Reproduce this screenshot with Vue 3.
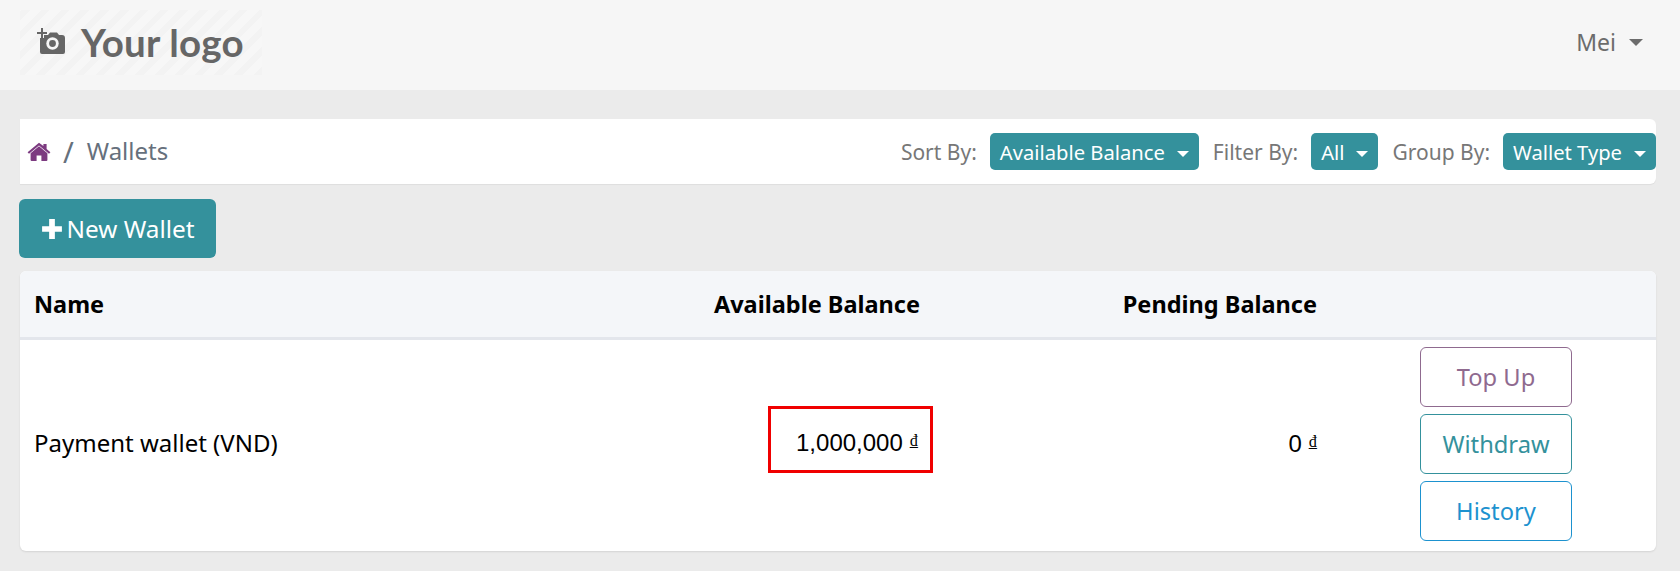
<template>
  <div class="page">
    <header class="topbar">
      <div class="logo">
        <svg class="logo__icon" viewBox="0 0 30 28" width="30" height="28">
          <path d="M5 0h2v4h4v2H7v4H5V6H1V4h4z" fill="#666" />
          <path d="M4 12V10h4V7h4l2-2.5h7L23 7h3a3 3 0 0 1 3 3v14a2 2 0 0 1-2 2H6a2 2 0 0 1-2-2z" fill="#666" />
          <circle cx="16.5" cy="15.5" r="6.2" fill="#f6f6f6" />
          <circle cx="16.5" cy="15.5" r="3.4" fill="#666" />
        </svg>
        <span class="logo__text">Your logo</span>
      </div>
      <div class="user">
        <span>Mei</span>
        <i class="caret caret--user"></i>
      </div>
    </header>

    <main class="content">
      <section class="crumbs">
        <nav class="crumbs__path">
          <svg class="home" viewBox="0 0 24 20" width="24" height="20">
            <path d="M12 4.2 3.6 11.2V18a1 1 0 0 0 1 1h5v-5.4h4.8V19h5a1 1 0 0 0 1-1v-6.8z" fill="#7c3a80" />
            <path d="M12 .8 0.6 10.2l1.4 1.6L12 3.6l10 8.2 1.4-1.6-3.8-3.1V2h-3.2v2.1z" fill="#7c3a80" />
          </svg>
          <span class="sep">/</span>
          <span class="current">Wallets</span>
        </nav>
        <div class="filters">
          <template v-for="item in filters" :key="item.label">
            <span class="filters__label">{{ item.label }}</span>
            <button class="pill" type="button">
              {{ item.value }}<i class="caret caret--pill"></i>
            </button>
          </template>
        </div>
      </section>

      <button class="new-wallet" type="button">
        <svg viewBox="0 0 20 20" width="22" height="22">
          <path d="M7.4 1h5.2v6.4H19v5.2h-6.4V19H7.4v-6.4H1V7.4h6.4z" fill="#fff" />
        </svg>
        New Wallet
      </button>

      <section class="wallets">
        <table class="wallets__table">
          <colgroup>
            <col class="col-name" />
            <col class="col-amount" />
            <col class="col-pending" />
            <col />
          </colgroup>
          <thead>
            <tr>
              <th>Name</th>
              <th class="right">Available Balance</th>
              <th class="right">Pending Balance</th>
              <th></th>
            </tr>
          </thead>
          <tbody>
            <tr v-for="wallet in wallets" :key="wallet.name">
              <td class="nudge">{{ wallet.name }}</td>
              <td class="right">
                <span class="marked">
                  <span class="amount">{{ wallet.available }}</span>
                  <span class="currency">₫</span>
                </span>
              </td>
              <td class="right nudge">
                <span class="amount">{{ wallet.pending }}</span>
                <span class="currency">₫</span>
              </td>
              <td class="actions">
                <button
                  v-for="action in actions"
                  :key="action.label"
                  type="button"
                  class="action"
                  :class="action.cls"
                >
                  {{ action.label }}
                </button>
              </td>
            </tr>
          </tbody>
        </table>
      </section>
    </main>
  </div>
</template>

<script setup>
const filters = [
  { label: "Sort By:", value: "Available Balance" },
  { label: "Filter By:", value: "All" },
  { label: "Group By:", value: "Wallet Type" }
];

const wallets = [
  { name: "Payment wallet (VND)", available: "1,000,000", pending: "0" }
];

const actions = [
  { label: "Top Up", cls: "action--topup" },
  { label: "Withdraw", cls: "action--withdraw" },
  { label: "History", cls: "action--history" }
];
</script>

<style>
html,
body {
  margin: 0;
  background: #ebebeb;
}
</style>

<style scoped>
.page {
  height: 571px;
  overflow: hidden;
  background: #ebebeb;
  font-family: "Noto Sans", "Open Sans", sans-serif;
}

.topbar {
  height: 90px;
  box-sizing: border-box;
  display: flex;
  align-items: center;
  justify-content: space-between;
  background: #f6f6f6;
  padding: 0 37px 6px 20px;
}

.logo {
  width: 242px;
  height: 65px;
  box-sizing: border-box;
  padding-left: 16px;
  display: flex;
  align-items: center;
  gap: 15px;
  color: #666;
  background: repeating-linear-gradient(
    -45deg,
    #f3f3f3 0 6px,
    #f7f7f7 6px 14px
  );
}

.logo__text {
  font-family: "Lato", sans-serif;
  font-size: 38.5px;
  font-weight: 700;
  letter-spacing: 0.2px;
}

.user {
  display: flex;
  align-items: center;
  gap: 13px;
  font-size: 23px;
  color: #6c6c6c;
}

.caret {
  display: inline-block;
  width: 0;
  height: 0;
  border-left: 7px solid transparent;
  border-right: 7px solid transparent;
  border-top: 7px solid #6c6c6c;
}

.caret--pill {
  border-top-color: #fff;
  border-left-width: 6px;
  border-right-width: 6px;
  border-top-width: 6px;
  margin-left: 12px;
  vertical-align: 3px;
}

.content {
  padding: 29px 24px 0 19px;
  display: flex;
  flex-direction: column;
}

.crumbs {
  height: 65px;
  margin-left: 1px;
  display: flex;
  align-items: center;
  justify-content: space-between;
  background: #fff;
  border-radius: 0 6px 6px 0;
  box-shadow: 0 1px 1px rgba(0, 0, 0, 0.06);
}

.crumbs__path {
  display: flex;
  align-items: center;
  padding-left: 7px;
  font-size: 24px;
  color: #66707c;
}

.current {
  margin-top: -2px;
}

.sep {
  margin: 0 13px 0 12px;
  font-size: 29px;
}

.filters {
  display: flex;
  align-items: center;
}

.filters__label {
  font-size: 21px;
  color: #777;
  margin-left: 14px;
  margin-right: 13px;
}

.pill {
  height: 37px;
  padding: 0 10px;
  border: none;
  border-radius: 5px;
  background: #34919c;
  color: #fff;
  font: inherit;
  font-size: 20.2px;
  white-space: nowrap;
}

.new-wallet {
  align-self: flex-start;
  width: 197px;
  height: 59px;
  margin-top: 15px;
  display: flex;
  align-items: center;
  justify-content: center;
  gap: 4px;
  border: none;
  border-radius: 6px;
  background: #34919c;
  color: #fff;
  font: inherit;
  font-size: 24.3px;
}

.wallets {
  margin: 13px 0 0 1px;
  height: 280px;
  background: #fff;
  border-radius: 6px;
  overflow: hidden;
  box-shadow: 0 1px 2px rgba(0, 0, 0, 0.1);
}

.wallets__table {
  width: 100%;
  border-collapse: collapse;
  table-layout: fixed;
  color: #000;
  font-size: 24px;
}

.col-name {
  width: 500px;
}

.col-amount {
  width: 414px;
}

.col-pending {
  width: 397px;
}

.wallets__table th {
  height: 66px;
  padding: 0 14px;
  text-align: left;
  font-size: 23.5px;
  font-weight: 700;
  background: #f4f6f9;
  border-bottom: 3px solid #e3e6ec;
}

.wallets__table th.right,
.wallets__table td.right {
  text-align: right;
}

.wallets__table td {
  padding: 0 14px;
  vertical-align: middle;
}

.wallets__table td.nudge {
  padding-bottom: 6px;
}

.amount {
  font-family: "Liberation Sans", sans-serif;
  font-size: 24px;
}

.currency {
  font-family: "DejaVu Serif", serif;
  font-size: 16px;
  vertical-align: 5px;
  margin-left: 7px;
}

.marked {
  display: inline-block;
  padding: 16px 12px 12px 25px;
  margin: 0 -13px 12px 0;
  border: 3px solid #f00000;
}

.actions {
  display: flex;
  flex-direction: column;
  gap: 7px;
  padding: 7px 0 9px 89px !important;
}

.action {
  width: 152px;
  height: 60px;
  background: #fff;
  border: 1px solid;
  border-radius: 6px;
  font: inherit;
  font-size: 23.7px;
}

.action--topup {
  color: #8f6a8f;
  border-color: #8f6a8f;
}

.action--withdraw {
  color: #34919c;
  border-color: #34919c;
}

.action--history {
  color: #1d92cf;
  border-color: #1d92cf;
}
</style>
